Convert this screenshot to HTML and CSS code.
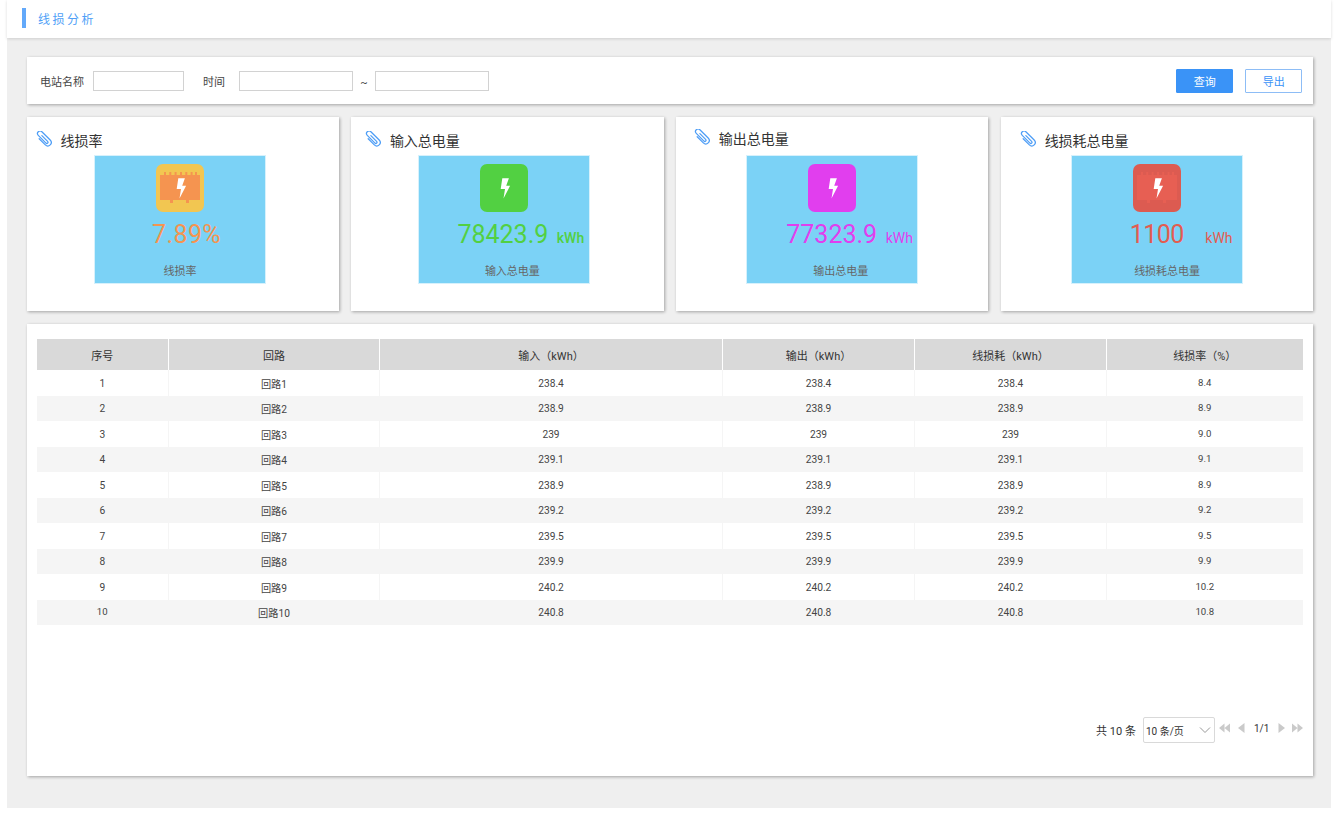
FILE: index.html
```html
<!DOCTYPE html>
<html lang="zh-CN">
<head>
<meta charset="utf-8">
<title>线损分析</title>
<link rel="stylesheet" href="styles.css">
</head>
<body>
<svg class="defs" width="0" height="0" aria-hidden="true">
  <symbol id="clip" viewBox="0.5 0.5 15 15">
    <g transform="rotate(-45 8 8)" fill="none" stroke="#4d9df6" stroke-width="1.15" stroke-linecap="round">
      <path d="M8.8 4.4v7.6a1.1 1.1 0 0 1-2.2 0V1.8a2.4 2.4 0 0 1 4.8 0v11a3.2 3.2 0 0 1-6.4 0V4.6"/>
    </g>
  </symbol>
  <symbol id="bolt" viewBox="0 0 48 48">
    <path fill="#fff" d="M22.3 14.3h6.6l-2.7 7.4h3.9l-6.6 12.8 1.5-9.4h-4.3z"/>
  </symbol>
  <symbol id="chip" viewBox="0 0 48 48">
    <path d="M4 11h40v25H4zM8 8h2v3H8zM13.3 8h2v3h-2zM18.6 8h2v3h-2zM24 8h2v3h-2zM29.3 8h2v3h-2zM34.6 8h2v3h-2zM39 8h2v3h-2zM14 36h3v3h-3zM30 36h3v3h-3z"/>
  </symbol>
</svg>
<header class="page-head">
  <span class="head-bar"></span>
  <h1 class="head-title">线损分析</h1>
</header>
<main class="page-main">
  <section class="card filter">
    <label class="f-label">电站名称</label>
    <div class="f-input f-w91"></div>
    <label class="f-label f-time">时间</label>
    <div class="f-input f-w114"></div>
    <span class="f-tilde">~</span>
    <div class="f-input f-w114"></div>
    <button class="btn btn-primary">查询</button>
    <button class="btn btn-ghost">导出</button>
  </section>

  <section class="kpis">
    <article class="card kpi k1">
      <h2 class="kpi-title"><svg class="clip"><use href="#clip"/></svg><span>线损率</span></h2>
      <div class="kpi-box">
        <div class="kpi-icon yellow"><svg class="chip"><use href="#chip"/></svg><svg class="bolt"><use href="#bolt"/></svg></div>
        <div class="kpi-value"><span class="num">7.89%</span></div>
        <div class="kpi-label">线损率</div>
      </div>
    </article>
    <article class="card kpi k2">
      <h2 class="kpi-title"><svg class="clip"><use href="#clip"/></svg><span>输入总电量</span></h2>
      <div class="kpi-box">
        <div class="kpi-icon green"><svg class="bolt"><use href="#bolt"/></svg></div>
        <div class="kpi-value"><span class="num">78423.9</span><span class="unit">kWh</span></div>
        <div class="kpi-label">输入总电量</div>
      </div>
    </article>
    <article class="card kpi k3">
      <h2 class="kpi-title"><svg class="clip"><use href="#clip"/></svg><span>输出总电量</span></h2>
      <div class="kpi-box">
        <div class="kpi-icon magenta"><svg class="bolt"><use href="#bolt"/></svg></div>
        <div class="kpi-value"><span class="num">77323.9</span><span class="unit">kWh</span></div>
        <div class="kpi-label">输出总电量</div>
      </div>
    </article>
    <article class="card kpi k4">
      <h2 class="kpi-title"><svg class="clip"><use href="#clip"/></svg><span>线损耗总电量</span></h2>
      <div class="kpi-box">
        <div class="kpi-icon red"><svg class="chip"><use href="#chip"/></svg><svg class="bolt"><use href="#bolt"/></svg></div>
        <div class="kpi-value"><span class="num">1100</span><span class="unit">kWh</span></div>
        <div class="kpi-label">线损耗总电量</div>
      </div>
    </article>
  </section>

  <section class="card table-card">
    <table class="data">
      <colgroup>
        <col class="c1"><col class="c2"><col class="c3"><col class="c4"><col class="c5"><col class="c6">
      </colgroup>
      <thead>
        <tr><th>序号</th><th>回路</th><th>输入（kWh）</th><th>输出（kWh）</th><th>线损耗（kWh）</th><th>线损率（%）</th></tr>
      </thead>
      <tbody>
        <tr><td>1</td><td>回路1</td><td>238.4</td><td>238.4</td><td>238.4</td><td class="rate">8.4</td></tr>
        <tr><td>2</td><td>回路2</td><td>238.9</td><td>238.9</td><td>238.9</td><td class="rate">8.9</td></tr>
        <tr><td>3</td><td>回路3</td><td>239</td><td>239</td><td>239</td><td class="rate">9.0</td></tr>
        <tr><td>4</td><td>回路4</td><td>239.1</td><td>239.1</td><td>239.1</td><td class="rate">9.1</td></tr>
        <tr><td>5</td><td>回路5</td><td>238.9</td><td>238.9</td><td>238.9</td><td class="rate">8.9</td></tr>
        <tr><td>6</td><td>回路6</td><td>239.2</td><td>239.2</td><td>239.2</td><td class="rate">9.2</td></tr>
        <tr><td>7</td><td>回路7</td><td>239.5</td><td>239.5</td><td>239.5</td><td class="rate">9.5</td></tr>
        <tr><td>8</td><td>回路8</td><td>239.9</td><td>239.9</td><td>239.9</td><td class="rate">9.9</td></tr>
        <tr><td>9</td><td>回路9</td><td>240.2</td><td>240.2</td><td>240.2</td><td class="rate">10.2</td></tr>
        <tr><td class="rate">10</td><td>回路10</td><td>240.8</td><td>240.8</td><td>240.8</td><td class="rate">10.8</td></tr>
      </tbody>
    </table>
    <div class="pager">
      <span class="pg-total">共 10 条</span>
      <div class="pg-select">
        <span>10 条/页</span>
        <svg class="pg-chev" viewBox="0 0 12 8"><path d="M1 1.5l5 5 5-5" fill="none" stroke="#999" stroke-width="1"/></svg>
      </div>
      <svg class="pg-ico pg-d" viewBox="0 0 12 10"><path d="M6 0v10L0 5zM12 0v10L6 5z"/></svg>
      <svg class="pg-ico pg-s pg-prev" viewBox="0 0 8 10"><path d="M7.5 0v10L1 5z"/></svg>
      <span class="pg-num">1/1</span>
      <svg class="pg-ico pg-s" viewBox="0 0 8 10"><path d="M.5 0v10L7 5z"/></svg>
      <svg class="pg-ico pg-d pg-last" viewBox="0 0 12 10"><path d="M0 0v10l6-5zM6 0v10l6-5z"/></svg>
    </div>
  </section>
</main>
</body>
</html>
```
FILE: styles.css
```css
* { box-sizing: border-box; }
html, body { margin: 0; padding: 0; }
body {
  background: #fff;
  font-family: Roboto, "Noto Sans CJK SC", sans-serif;
  color: #333;
  height: 816px;
  overflow: hidden;
}
.defs { position: absolute; }

.page-head {
  height: 38px;
  margin: 0 6px 0 7px;
  display: flex;
  align-items: flex-start;
  background: #fff;
  box-shadow: 0 1px 3px rgba(0,0,0,.14);
  position: relative;
}
.head-bar { width: 4px; height: 20px; margin: 8px 0 0 15px; background: #63a9fa; }
.head-title {
  margin: 10px 0 0 12px;
  font-size: 12px;
  line-height: 20px;
  font-weight: 400;
  letter-spacing: 2.5px;
  color: #4f9ff7;
}

.page-main {
  height: 770px;
  margin: 0 6px 0 7px;
  padding: 19px 17.7px 32px 19.5px;
  background: #efefef;
  display: flex;
  flex-direction: column;
  gap: 13px;
}
.card {
  background: #fff;
  box-shadow: 1px 1px 3px rgba(0,0,0,.32);
}

.filter {
  height: 47px;
  flex: none;
  display: flex;
  align-items: center;
  padding: 0 11px 0 13.5px;
  font-size: 11px;
  color: #444;
}
.f-label { line-height: 20px; margin-top: 4px; }
.f-time { margin-left: 19px; margin-right: 14px; }
.f-input { height: 20px; border: 1px solid #d2d2d2; background: #fff; margin-top: 0; }
.f-w91 { width: 91px; margin-left: 9px; }
.f-w114 { width: 114px; }
.f-tilde { width: 22px; text-align: center; margin-top: 3px; }
.btn {
  width: 57px;
  height: 24px;
  padding: 0;
  border-radius: 1px;
  font: 11px Roboto, "Noto Sans CJK SC", sans-serif;
  margin-top: 0;
}
.btn-primary { margin-left: auto; background: #3a93f7; border: 1px solid #3a93f7; color: #fff; }
.btn-ghost { margin-left: 12px; background: #fff; border: 1px solid #8dbdf6; color: #3a93f7; }

.kpis {
  flex: none;
  height: 194px;
  display: grid;
  grid-template-columns: repeat(4, 1fr);
  column-gap: 12.7px;
}
.kpi { display: flex; flex-direction: column; }
.kpi-title {
  height: 39px;
  margin: 0;
  padding-top: 14px;
  display: flex;
  align-items: flex-start;
  font-size: 14px;
  line-height: 20px;
  font-weight: 400;
  color: #333;
}
.clip { width: 16px; height: 16px; margin: 0 9px 0 -1px; flex: none; }
.kpi-box {
  width: 172px;
  height: 129px;
  margin-top: -1px;
  border: 1px solid #d6f1fc;
  background: #7bd2f6;
  display: flex;
  flex-direction: column;
  position: relative;
}
.kpi-icon {
  width: 48px;
  height: 48px;
  margin: 8px 0 0 61px;
  border-radius: 7px;
  position: relative;
  flex: none;
}
.chip, .bolt { position: absolute; left: 0; top: 0; width: 48px; height: 48px; }
.yellow { background: #f2c651; }
.yellow .chip { fill: #f59450; }
.green { background: #52d042; }
.magenta { background: #e13eee; }
.red { background: #dc5b51; }
.red .chip { fill: #e75f53; }

.kpi-value {
  height: 30px;
  margin-top: 8px;
  display: flex;
  align-items: baseline;
  line-height: 30px;
  white-space: nowrap;
}
.num { font-size: 25px; }
.unit { font-size: 14px; }
.kpi-label {
  margin-top: 13px;
  font-size: 11px;
  line-height: 18px;
  color: #666;
  text-align: center;
}
.k1 .kpi-title { padding-left: 10px; }
.k1 .kpi-box { margin-left: 67.5px; }
.k1 .kpi-value { padding-left: 57px; color: #f59450; }
.k1 .num { letter-spacing: .4px; }
.k2 .kpi-title { padding-left: 14.5px; }
.k2 .kpi-box { margin-left: 67px; }
.k2 .kpi-value { padding-left: 38px; color: #52d042; }
.k2 .unit { margin-left: 8.5px; font-weight: 500; }
.k3 .unit { margin-left: 8.5px; }
.k2 .kpi-label { padding-left: 16px; }
.k3 .kpi-label { padding-left: 17px; }
.k3 .kpi-title { padding-left: 18.5px; padding-top: 12px; }
.k3 .kpi-box { margin-left: 70px; }
.k3 .kpi-value { padding-left: 39px; color: #e13eee; }
.k4 .kpi-title { padding-left: 19.5px; }
.k4 .kpi-box { margin-left: 70px; }
.k4 .kpi-value { padding-left: 57.5px; color: #e35c50; }
.k4 .num { letter-spacing: -.5px; }
.k4 .unit { margin-left: 21.5px; }
.k4 .kpi-label { padding-left: 20px; }

.table-card {
  flex: 1;
  min-height: 0;
  padding: 15px 10px 33px;
  display: flex;
  flex-direction: column;
}
.data {
  width: 1266px;
  table-layout: fixed;
  border-collapse: collapse;
  font-size: 10.2px;
  color: #444;
  text-align: center;
}
.c1 { width: 132px; }
.c2 { width: 211px; }
.c3 { width: 343px; }
.c4 { width: 192px; }
.c5 { width: 192px; }
.c6 { width: 196px; }
.data th {
  height: 31px;
  padding: 0;
  background: #d9d9d9;
  border-right: 1px solid #fff;
  font-size: 11px;
  font-weight: 400;
  color: #333;
}
.data th:last-child, .data td:last-child { border-right: 0; }
.data td {
  height: 25.5px;
  padding: 1px 0 0;
  border-right: 1px solid #f5f5f5;
}
.data tbody tr:nth-child(even) td { background: #f5f5f5; border-right-color: #f5f5f5; }
.data .rate { font-size: 9.6px; padding-bottom: 2px; }

.pager {
  margin-top: auto;
  height: 26px;
  display: flex;
  align-items: flex-start;
  justify-content: flex-end;
  font-size: 11px;
  color: #333;
}
.pg-total { font-size: 11px; line-height: 16px; margin-top: 7px; }
.pg-select {
  width: 72px;
  height: 26px;
  margin: 0 4px 0 7px;
  padding-left: 2px;
  border: 1px solid #d9d9d9;
  border-radius: 2px;
  background: #fff;
  display: flex;
  align-items: center;
  justify-content: space-between;
  font-size: 10px;
}
.pg-chev { width: 12px; height: 8px; margin-right: 3px; }
.pg-ico { fill: #cacaca; height: 10px; margin-top: 6px; flex: none; }
.pg-d { width: 11px; }
.pg-s { width: 8px; }
.pg-prev { margin-left: 7px; }
.pg-num { margin: 5px 9px 0 9px; font-size: 10px; line-height: 14px; }
.pg-last { margin-left: 6px; }
```
